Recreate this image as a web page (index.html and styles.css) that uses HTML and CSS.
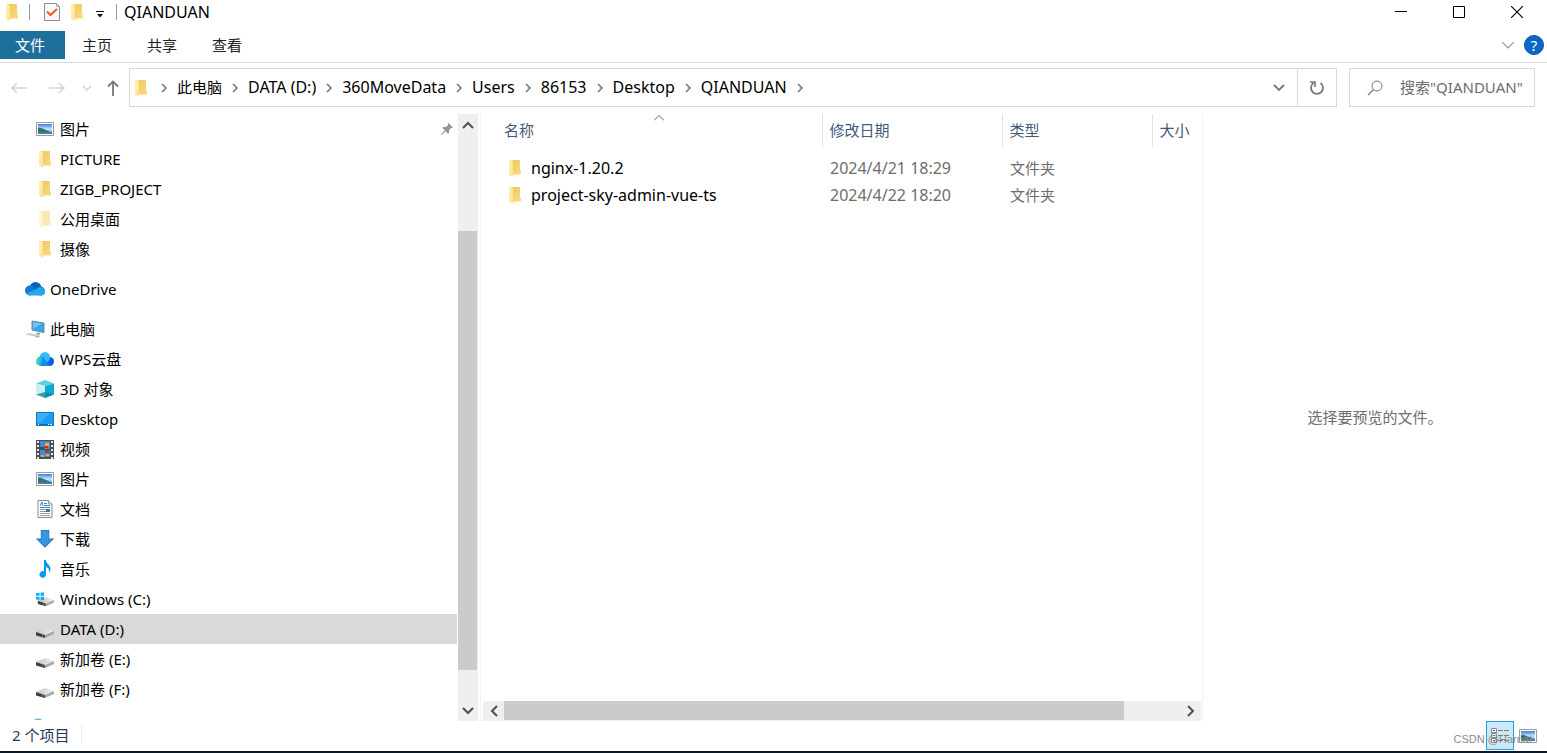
FILE: index.html
```html
<!DOCTYPE html>
<html lang="zh-CN">
<head>
<meta charset="utf-8">
<title>QIANDUAN</title>
<link rel="stylesheet" href="styles.css">
</head>
<body>
<svg class="defs" aria-hidden="true">
  <defs>
    <linearGradient id="gFront" x1="0" y1="0" x2="1" y2="1"><stop offset="0" stop-color="#fff0bd"/><stop offset="1" stop-color="#ffe08a"/></linearGradient>
    <linearGradient id="gBack" x1="0" y1="0" x2="1" y2="1"><stop offset="0" stop-color="#edc75f"/><stop offset="1" stop-color="#fbdc80"/></linearGradient>
    <linearGradient id="gSky" x1="0" y1="0" x2="0" y2="1"><stop offset="0" stop-color="#3d7fd6"/><stop offset=".5" stop-color="#c4e6fb"/><stop offset="1" stop-color="#4f93c4"/></linearGradient>
    <linearGradient id="gWps" x1="0" y1="0" x2="1" y2="0"><stop offset="0" stop-color="#0a6fe8"/><stop offset="1" stop-color="#0a50dc"/></linearGradient>
    <linearGradient id="gWpsLeft" x1="0" y1="0" x2="1" y2="0"><stop offset="0" stop-color="#35e2c0"/><stop offset="1" stop-color="#1a93f0"/></linearGradient>
    <linearGradient id="gDisk" x1="0" y1="0" x2="1" y2="0"><stop offset="0" stop-color="#c6c6c6"/><stop offset="1" stop-color="#f0f0f0"/></linearGradient>
    <symbol id="folder" viewBox="0 0 14 18"><path d="M3 1h9v10.500l1 .5v3.500H3z" fill="url(#gBack)"/><path d="M1 1h2l2 1.500V18l-4-2.500z" fill="url(#gFront)"/></symbol>
    <symbol id="picture" viewBox="0 0 18 14"><path d="M.5.5h17v13H.5z" fill="#fff" stroke="#9b9b9b"/><path d="M2 2h14v10H2z" fill="url(#gSky)"/><path d="M2 6c3-1 5 1 8 2l4 1.500-4 1H2z" fill="#3c7064"/><path d="M2 10h14v2H2z" fill="#3c7eb0"/></symbol>
    <symbol id="onedrive" viewBox="0 0 20 14"><circle cx="10.500" cy="6" r="6" fill="#0a5fb8"/><circle cx="15.500" cy="9" r="4.500" fill="#1490df"/><circle cx="5" cy="8.500" r="5" fill="#1379d4"/><path d="M4 4l10 4.500-6 4H4z" fill="#1379d4"/><path d="M1 11.500l10-4.300c2-1.500 5.500-2 7.500-.5 1 .8 1.500 2 1.500 3.300 0 2-1.500 3.500-3.500 3.500H5c-1.700 0-3.200-.7-4-2z" fill="#28a8ea"/></symbol>
    <symbol id="pc" viewBox="0 0 20 18"><path d="M7 1l12 2v9.500L7 10z" fill="#3aa6ea" stroke="#68889c"/><path d="M8 2l9 1.500L8 9z" fill="#71c5f5"/><path d="M12 12.500l3 .5v2l-4-1z" fill="#909ba2"/><path d="M0 14.500l4-1.500 10 2-4 1.500z" fill="#c9cdd1"/><path d="M10 16l3-1 2 1.500-3 1.500z" fill="#aab0b5"/></symbol>
    <symbol id="wps" viewBox="0 0 18 14"><circle cx="13.500" cy="9.500" r="4.500" fill="url(#gWps)"/><path d="M4.500 9h9v5h-9z" fill="#0a68e8"/><circle cx="9" cy="5.200" r="5.200" fill="#38b8fb"/><circle cx="4.700" cy="9.200" r="4.700" fill="url(#gWpsLeft)"/><path d="M7 5.500L14 14H4.500z" fill="#1787f0"/></symbol>
    <symbol id="cube" viewBox="0 0 18 18"><path d="M9 0l9 3.500L9 6 0 3.500z" fill="#62d0dc"/><path d="M0 3.500L9 6v12l-9-3.500z" fill="#c9f0f1"/><path d="M18 3.500L9 6v12l9-3.500z" fill="#0fa6cf"/><path d="M0 14.500L9 12l9 2.500L9 18z" fill="#06879d" opacity=".75"/></symbol>
    <symbol id="desktop" viewBox="0 0 18 14"><path d="M.5.500h17v13H.5z" fill="#1b9df4" stroke="#1474b8"/><path d="M1 1h13L4 11H1z" fill="#3aadfb"/><path d="M1 12.500h16" stroke="#0d69b0"/><path d="M2 12.500h1M12 12.500h1M14 12.500h2" stroke="#fff"/></symbol>
    <symbol id="video" viewBox="0 0 18 19"><path d="M0 0h18v19H0z" fill="#4c4c4c"/><path d="M4 1h10v8H4zM4 10h10v8H4z" fill="#4387df"/><path d="M2 1v18M16 1v18" stroke="#e8e8e8" stroke-width="2" stroke-dasharray="2 2"/><path d="M9 3h4v3H9z" fill="#e2b52b"/><path d="M8 6h4v2H8z" fill="#bb352c"/><path d="M4 7h4v2H4z" fill="#345b25"/><path d="M9 10h4v3H9z" fill="#bb352c"/><path d="M5 15h3v2H5zM10 14h3v2h-3z" fill="#d9b52a"/><path d="M4 17h10v1H4z" fill="#38552c"/></symbol>
    <symbol id="doc" viewBox="0 0 16 18"><path d="M1 .5h10.500L15 4v13.500H1z" fill="#fff" stroke="#888"/><path d="M11.500.5V4H15" fill="#ddd" stroke="#999"/><path d="M3 6l2-4 1 4M7 3.500h3M7 5.500h6M3 7.500h10" fill="none" stroke="#2b8fd8"/><path d="M3 9.500h6M3 11.500h6M3 13.500h10M3 15.500h10" stroke="#999"/><path d="M9 9h4v3H9z" fill="#3b77ae"/></symbol>
    <symbol id="download" viewBox="0 0 16 17"><path d="M4.500.5h7v8h4L8 16 .5 8.500h4z" fill="#3a94e6" stroke="#2679c8"/></symbol>
    <symbol id="music" viewBox="0 0 12 18"><path d="M5 0h2c0 4 5 5 4.500 9.500-.2 1.500-1 2.500-1.500 3 .5-3-.5-5-3-5.500v7a3.300 3.300 0 1 1-2-2.700z" fill="#0a9bef"/></symbol>
    <symbol id="disk" viewBox="0 0 18 10"><path d="M0 4l9-4 9 3-9 4z" fill="url(#gDisk)"/><path d="M0 4l9 3v3L0 7.500z" fill="#3f4242"/><path d="M9 7l9-4v3l-9 4z" fill="#a9a9a9"/><path d="M6 7.500l1.500.4" stroke="#37c43f"/></symbol>
    <symbol id="windisk" viewBox="0 0 20 16"><path d="M2 10l9-4 9 3-9 4z" fill="url(#gDisk)"/><path d="M2 10l9 3v3l-9-2.500z" fill="#3f4242"/><path d="M11 13l9-4v3l-9 4z" fill="#a9a9a9"/><path d="M8 13.500l1.500.4" stroke="#37c43f"/><path d="M0 1.500L4 1v3.500H0zM5 1l4-.5v4H5zM0 5.500h4V9l-4-.5zM5 5.500h4v4L5 9z" fill="#18aaf0"/></symbol>
    <symbol id="chev" viewBox="0 0 8 10"><path d="M2 1l4 4-4 4" fill="none" stroke="#777" stroke-width="1.600"/></symbol>
  </defs>
</svg>

<div class="window">
  <header class="titlebar">
    <svg class="folder"><use href="#folder"/></svg>
    <span class="rule first-rule"></span>
    <button class="plain check" aria-label="属性"><svg width="16" height="18" viewBox="0 0 16 18"><path d="M.5.500h12l3 3v14H.5z" fill="#f8f8f8" stroke="#8d8d8d"/><path d="M12.500.5v3h3" fill="none" stroke="#aaa"/><path d="M3 8.500l3.500 3.500L13 6" fill="none" stroke="#f05a1a" stroke-width="2"/></svg></button>
    <button class="plain new-folder" aria-label="新建文件夹"><svg class="folder"><use href="#folder"/></svg></button>
    <button class="plain customize" aria-label="自定义快速访问工具栏"><svg width="8" height="7" viewBox="0 0 8 7"><path d="M0 .5h8" stroke="#111"/><path d="M1 3h6L4 6.500z" fill="#111"/></svg></button>
    <span class="rule"></span>
    <h1 class="title">QIANDUAN</h1>
    <div class="window-controls">
      <button class="plain" aria-label="最小化"><svg width="12" height="12" viewBox="0 0 12 12"><path d="M0 5.500h12" stroke="#000"/></svg></button>
      <button class="plain" aria-label="最大化"><svg width="12" height="12" viewBox="0 0 12 12"><path d="M.5.500h11v11H.5z" fill="none" stroke="#000"/></svg></button>
      <button class="plain" aria-label="关闭"><svg width="12" height="12" viewBox="0 0 12 12"><path d="M0 0l12 12M12 0L0 12" stroke="#000" stroke-width="1.100"/></svg></button>
    </div>
  </header>

  <nav class="ribbon">
    <button class="tab active">文件</button>
    <button class="tab">主页</button>
    <button class="tab">共享</button>
    <button class="tab">查看</button>
    <button class="plain expand" aria-label="展开功能区"><svg width="12" height="8" viewBox="0 0 12 8"><path d="M0 1l6 6 6-6" fill="none" stroke="#999" stroke-width="1.200"/></svg></button>
    <button class="help" aria-label="帮助">?</button>
  </nav>

  <div class="address-row">
    <div class="history">
      <button class="plain" aria-label="后退"><svg width="16" height="12" viewBox="0 0 16 12"><path d="M16 6H1M6 1L1 6l5 5" fill="none" stroke="#d2d2d2" stroke-width="1.500"/></svg></button>
      <button class="plain" aria-label="前进"><svg width="16" height="12" viewBox="0 0 16 12"><path d="M0 6h15M10 1l5 5-5 5" fill="none" stroke="#d2d2d2" stroke-width="1.500"/></svg></button>
      <button class="plain recent" aria-label="最近位置"><svg width="8" height="6" viewBox="0 0 8 6"><path d="M0 1l4 4 4-4" fill="none" stroke="#d2d2d2" stroke-width="1.500"/></svg></button>
      <button class="plain up" aria-label="上移"><svg width="12" height="16" viewBox="0 0 12 16"><path d="M6 16V1.500M1 6.500l5-5 5 5" fill="none" stroke="#777" stroke-width="1.800"/></svg></button>
    </div>
    <div class="address">
      <svg class="folder"><use href="#folder"/></svg>
      <svg class="sep"><use href="#chev"/></svg><a class="zh" href="#">此电脑</a>
      <svg class="sep"><use href="#chev"/></svg><a href="#">DATA (D:)</a>
      <svg class="sep"><use href="#chev"/></svg><a href="#">360MoveData</a>
      <svg class="sep"><use href="#chev"/></svg><a href="#">Users</a>
      <svg class="sep"><use href="#chev"/></svg><a href="#">86153</a>
      <svg class="sep"><use href="#chev"/></svg><a href="#">Desktop</a>
      <svg class="sep"><use href="#chev"/></svg><a href="#">QIANDUAN</a>
      <svg class="sep"><use href="#chev"/></svg>
      <button class="plain drop" aria-label="以前的位置"><svg width="12" height="8" viewBox="0 0 12 8"><path d="M1 1l5 5 5-5" fill="none" stroke="#777" stroke-width="1.800"/></svg></button>
      <button class="plain refresh" aria-label="刷新"><svg width="16" height="16" viewBox="0 0 16 16"><path d="M11.500 3A6 6 0 1 1 4.500 3" fill="none" stroke="#777" stroke-width="1.800"/><path d="M1 2h5v5" fill="none" stroke="#777" stroke-width="1.600"/></svg></button>
    </div>
    <label class="search">
      <svg width="16" height="16" viewBox="0 0 16 16"><circle cx="10" cy="6" r="5" fill="none" stroke="#777"/><path d="M6.500 9.500L1 15" stroke="#777" stroke-width="1.200"/></svg>
      <input type="text" aria-label="搜索" placeholder="搜索&quot;QIANDUAN&quot;">
    </label>
  </div>

  <main class="panes">
    <nav class="tree">
      <a class="item" href="#"><svg class="icon"><use href="#picture"/></svg>图片<svg class="pin" width="12" height="12" viewBox="0 0 12 12"><path d="M7.500 0L12 4.500l-1.200.8-.8-.3-2 2.200.2 2.500-1.200 1L4.500 8.200.8 12 0 11.200l3.800-3.700L1.500 5l1-1.200 2.500.2L7.200 2 6.800 1z" fill="#8b98a3"/></svg></a>
      <a class="item" href="#"><svg class="icon"><use href="#folder"/></svg>PICTURE</a>
      <a class="item" href="#"><svg class="icon"><use href="#folder"/></svg>ZIGB_PROJECT</a>
      <a class="item" href="#"><svg class="icon faded"><use href="#folder"/></svg>公用桌面</a>
      <a class="item" href="#"><svg class="icon"><use href="#folder"/></svg>摄像</a>
      <a class="item root" href="#"><svg class="icon"><use href="#onedrive"/></svg>OneDrive</a>
      <a class="item root" href="#"><svg class="icon"><use href="#pc"/></svg>此电脑</a>
      <a class="item" href="#"><svg class="icon"><use href="#wps"/></svg>WPS云盘</a>
      <a class="item" href="#"><svg class="icon"><use href="#cube"/></svg>3D 对象</a>
      <a class="item" href="#"><svg class="icon"><use href="#desktop"/></svg>Desktop</a>
      <a class="item" href="#"><svg class="icon tall"><use href="#video"/></svg>视频</a>
      <a class="item" href="#"><svg class="icon"><use href="#picture"/></svg>图片</a>
      <a class="item" href="#"><svg class="icon"><use href="#doc"/></svg>文档</a>
      <a class="item" href="#"><svg class="icon"><use href="#download"/></svg>下载</a>
      <a class="item" href="#"><svg class="icon"><use href="#music"/></svg>音乐</a>
      <a class="item" href="#"><svg class="icon"><use href="#windisk"/></svg>Windows (C:)</a>
      <a class="item selected" href="#"><svg class="icon disk"><use href="#disk"/></svg>DATA (D:)</a>
      <a class="item" href="#"><svg class="icon disk"><use href="#disk"/></svg>新加卷 (E:)</a>
      <a class="item" href="#"><svg class="icon disk"><use href="#disk"/></svg>新加卷 (F:)</a>
      <svg class="next-root" width="8" height="2" viewBox="0 0 8 2"><ellipse cx="4" cy="2" rx="3.500" ry="1.500" fill="#5fb4d8"/></svg>
    </nav>
    <div class="scroll-y">
      <button class="plain" aria-label="向上滚动"><svg width="12" height="8" viewBox="0 0 12 8"><path d="M1 7l5-5 5 5" fill="none" stroke="#505050" stroke-width="2"/></svg></button>
      <div class="track-y"><span class="before"></span><span class="thumb"></span><span class="after"></span></div>
      <button class="plain" aria-label="向下滚动"><svg width="12" height="8" viewBox="0 0 12 8"><path d="M1 1l5 5 5-5" fill="none" stroke="#505050" stroke-width="2"/></svg></button>
    </div>

    <section class="list">
      <div class="files">
        <svg class="sort" width="10" height="6" viewBox="0 0 10 6"><path d="M0 5.500l5-5 5 5" fill="none" stroke="#666"/></svg>
        <table>
          <colgroup><col><col class="c-date"><col class="c-type"><col class="c-size"></colgroup>
          <thead><tr><th>名称</th><th>修改日期</th><th>类型</th><th>大小</th></tr></thead>
          <tbody>
            <tr class="spacer"><td colspan="4"></td></tr>
            <tr><td><div class="name"><svg class="folder"><use href="#folder"/></svg>nginx-1.20.2</div></td><td class="date">2024/4/21 18:29</td><td>文件夹</td><td></td></tr>
            <tr><td><div class="name"><svg class="folder"><use href="#folder"/></svg>project-sky-admin-vue-ts</div></td><td class="date">2024/4/22 18:20</td><td>文件夹</td><td></td></tr>
          </tbody>
        </table>
      </div>
      <div class="scroll-x">
        <button class="plain" aria-label="向左滚动"><svg width="8" height="12" viewBox="0 0 8 12"><path d="M7 1L2 6l5 5" fill="none" stroke="#505050" stroke-width="2"/></svg></button>
        <div class="track-x"><span class="thumb"></span><span class="after"></span></div>
        <button class="plain" aria-label="向右滚动"><svg width="8" height="12" viewBox="0 0 8 12"><path d="M1 1l5 5-5 5" fill="none" stroke="#505050" stroke-width="2"/></svg></button>
      </div>
    </section>

    <aside class="preview">选择要预览的文件。</aside>
  </main>

  <footer class="status">
    <span class="count">2 个项目</span>
    <div class="views">
      <button class="view on" aria-label="详细信息"><svg width="18" height="16" viewBox="0 0 18 16"><path d="M.5.500h5v4h-5zM.5 5.500h5v4h-5zM.5 10.500h5v4h-5z" fill="#fff" stroke="#8a8a8a"/><path d="M2 2h2v1H2z" fill="#246bbd"/><path d="M2 7h2v1H2zM2 12h2v1H2z" fill="#c43c25"/><path d="M7 2.500h5M13 2.500h5M7 7.500h5M13 7.500h5M7 12.500h5M13 12.500h5" stroke="#777"/></svg></button>
      <button class="view" aria-label="大图标"><svg width="18" height="14"><use href="#picture"/></svg></button>
    </div>
    <span class="watermark">CSDN @Harriat</span>
  </footer>
</div>
</body>
</html>
```
FILE: styles.css
```css
* { box-sizing: border-box; }
body {
  margin: 0;
  background: #fff;
  color: #000;
  font: 15px/20px "Noto Sans", "Noto Sans CJK SC", sans-serif;
}
svg { display: block; flex: none; }
a { color: inherit; text-decoration: none; }
button, input { font: inherit; color: inherit; }
.defs { position: absolute; width: 0; height: 0; }
.plain {
  display: flex;
  align-items: center;
  justify-content: center;
  padding: 0;
  border: 0;
  background: none;
}
.folder { width: 14px; height: 18px; }

.window {
  display: flex;
  flex-direction: column;
  min-height: 100vh;
  border-bottom: 2px solid #0b1a28;
}

.titlebar {
  display: flex;
  align-items: center;
  height: 24px;
  padding: 0 1px 0 5px;
}
.rule { width: 1px; height: 16px; background: #9a9a9a; }
.first-rule { margin-left: 10px; }
.check { margin-left: 14px; }
.new-folder { margin-left: 10px; }
.customize { margin: 4px 12px 0 12px; }
.title { margin: 0 0 0 7px; font-size: 16px; font-weight: 400; }
.window-controls { display: flex; margin-left: auto; }
.window-controls .plain { width: 58px; height: 24px; }

.ribbon {
  display: flex;
  align-items: center;
  height: 39px;
  padding: 7px 3px 3px 0;
  border-bottom: 1px solid #dadbdc;
}
.tab {
  width: 65px;
  height: 28px;
  padding: 0 1px 0 0;
  border: 0;
  background: none;
  color: #222;
}
.tab.active { padding-right: 5px; background: #1f6f9c; color: #fff; }
.expand { margin-left: auto; }
.help {
  width: 20px;
  height: 20px;
  margin-left: 10px;
  padding: 0;
  border: 1px solid #0a559e;
  border-radius: 50%;
  background: #0a68c8;
  color: #fff;
  line-height: 18px;
}

.address-row {
  display: flex;
  height: 51px;
  padding: 5px 12px 7px 11px;
}
.history { display: flex; align-items: center; width: 118px; }
.history .plain + .plain { margin-left: 22px; }
.history .plain.recent { margin-left: 18px; }
.history .plain.up { margin-left: 16px; }
.address {
  display: flex;
  flex: 1;
  align-items: center;
  padding-left: 4px;
  border: 1px solid #d9d9d9;
  font-size: 16px;
}
.address a { margin-bottom: 2px; }
.address .zh { font-size: 15px; }
.sep { width: 8px; height: 10px; margin: 0 9px; }
.address .folder { margin-right: 3px; }
.address .drop { width: 36px; height: 100%; margin-left: auto; }
.address .refresh { width: 39px; height: 100%; border-left: 1px solid #d9d9d9; }
.search {
  display: flex;
  align-items: center;
  width: 186px;
  margin-left: 12px;
  padding-left: 17px;
  border: 1px solid #d9d9d9;
}
.search input {
  flex: 1;
  min-width: 0;
  margin-left: 17px;
  padding: 0 0 2px;
  border: 0;
  outline: 0;
}
.search input::placeholder { color: #6d6d6d; opacity: 1; }

.panes { display: flex; flex: 1; }
.tree { width: 458px; padding-right: 1px; }
.item {
  display: flex;
  align-items: center;
  height: 30px;
  padding-left: 36px;
}
.icon { width: 18px; height: 18px; margin-right: 6px; }
.item.root { height: 40px; padding: 10px 0 0 25px; }
.root .icon { width: 20px; margin-right: 5px; }
.icon.disk { height: 10px; margin-top: 8px; }
.icon.faded { opacity: .5; }
.icon.tall { height: 19px; }
.pin { margin: 0 4px 0 auto; }
.next-root { margin: 14px 0 0 34px; }
.selected { background: #d9d9d9; }

.scroll-y {
  display: flex;
  flex-direction: column;
  width: 20px;
  background: #efefef;
}
.scroll-y .plain { height: 21px; }
.track-y { display: flex; flex: 1; flex-direction: column; }
.track-y .before { flex: 96; }
.track-y .thumb { flex: 439; margin-right: 1px; }
.track-y .after { flex: 30; }
.thumb { background: #cbcbcb; }

.list {
  display: flex;
  flex: 1;
  flex-direction: column;
  justify-content: space-between;
  margin-left: 2px;
  padding: 0 1px 0 2px;
  border: solid #f3f3f3;
  border-width: 0 1px;
}
.files { position: relative; }
.sort { position: absolute; top: 1px; left: 171px; }
table { width: 100%; border-collapse: collapse; table-layout: fixed; }
.c-date { width: 180px; }
.c-type { width: 150px; }
.c-size { width: 49px; }
th {
  height: 33px;
  padding: 0 0 2px 7px;
  border-left: 1px solid #e2e2e2;
  color: #44597a;
  font-weight: 400;
  text-align: left;
  white-space: nowrap;
}
th:first-child { padding-left: 21px; border-left: 0; }
td { height: 27px; padding: 0 0 2px 8px; color: #6d6d6d; }
td:first-child { padding-left: 25px; color: #000; }
.spacer td { height: 8px; }
.date { font-size: 16px; }
.name { display: flex; align-items: center; gap: 9px; font-size: 16px; }
.scroll-x { display: flex; height: 20px; background: #efefef; }
.scroll-x .plain { width: 21px; }
.track-x { display: flex; flex: 1; }
.track-x .thumb { flex: 620; margin-bottom: 1px; }
.track-x .after { flex: 56; }

.preview {
  display: flex;
  align-items: center;
  justify-content: center;
  width: 344px;
  padding-bottom: 2px;
  color: #6d6d6d;
}

.status {
  position: relative;
  display: flex;
  align-items: center;
  height: 30px;
  padding: 0 5px 2px 12px;
  color: #1e395b;
}
.count { padding-right: 12px; border-right: 1px solid #eee; }
.views { display: flex; align-self: flex-start; margin-left: auto; }
.view {
  display: flex;
  align-items: center;
  justify-content: center;
  width: 28px;
  height: 29px;
  padding: 0;
  border: 0;
  background: none;
}
.view.on { border: 1px solid #26a0da; background: #cbe8f6; }
.watermark {
  position: absolute;
  right: 15px;
  bottom: 4px;
  color: #8c8c8c;
  font: 11px/16px "Liberation Sans", sans-serif;
}
```
